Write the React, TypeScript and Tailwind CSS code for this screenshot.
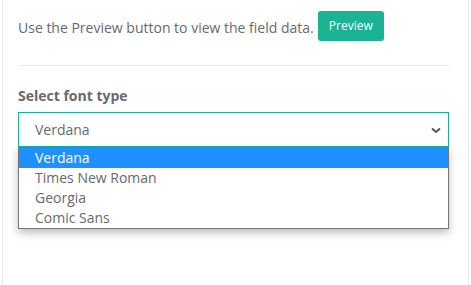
const options = ['Verdana', 'Times New Roman', 'Georgia', 'Comic Sans']

export default function App() {
  return (
    <div className="h-[285px] w-[471px] bg-white font-['Open_Sans',sans-serif] text-[#676a6c] overflow-hidden">
      <div className="mx-[2px] h-full border-l border-r border-[#e7eaec] pl-[15px] pr-[19px] pt-[11px]">
        <div className="flex items-center">
          <span className="pt-[3px] text-[14px]">Use the Preview button to view the field data.</span>
          <button className="ml-[4px] h-[30px] w-[66px] rounded-[3px] bg-[#1ab394] text-[12px] text-white">
            Preview
          </button>
        </div>
        <div className="mt-[24px] border-t border-[#e7eaec]" />
        <div className="mt-[20px] text-[14px] font-bold leading-[20px]">Select font type</div>
        <div className="relative mt-[6px]">
          <div className="flex h-[35px] items-center justify-between border border-[#1ab394] pl-[16px] pr-[6px] text-[14px]">
            <span>Verdana</span>
            <svg width="12" height="12" viewBox="0 0 12 12" className="text-[#555]">
              <path d="M2 4.5 L6 8 L10 4.5" fill="none" stroke="currentColor" strokeWidth="2" />
            </svg>
          </div>
          <div className="absolute left-0 right-0 top-[35px] border border-[#767676] bg-white shadow-[0_4px_8px_rgba(0,0,0,0.25)]">
            {options.map((o, i) => (
              <div
                key={o}
                className={
                  i === 0
                    ? 'h-[20px] bg-[#1e90ff] pl-[16px] text-[14px] leading-[20px] text-white'
                    : 'h-[20px] pl-[16px] text-[14px] leading-[20px]'
                }
              >
                {o}
              </div>
            ))}
          </div>
        </div>
      </div>
    </div>
  )
}
